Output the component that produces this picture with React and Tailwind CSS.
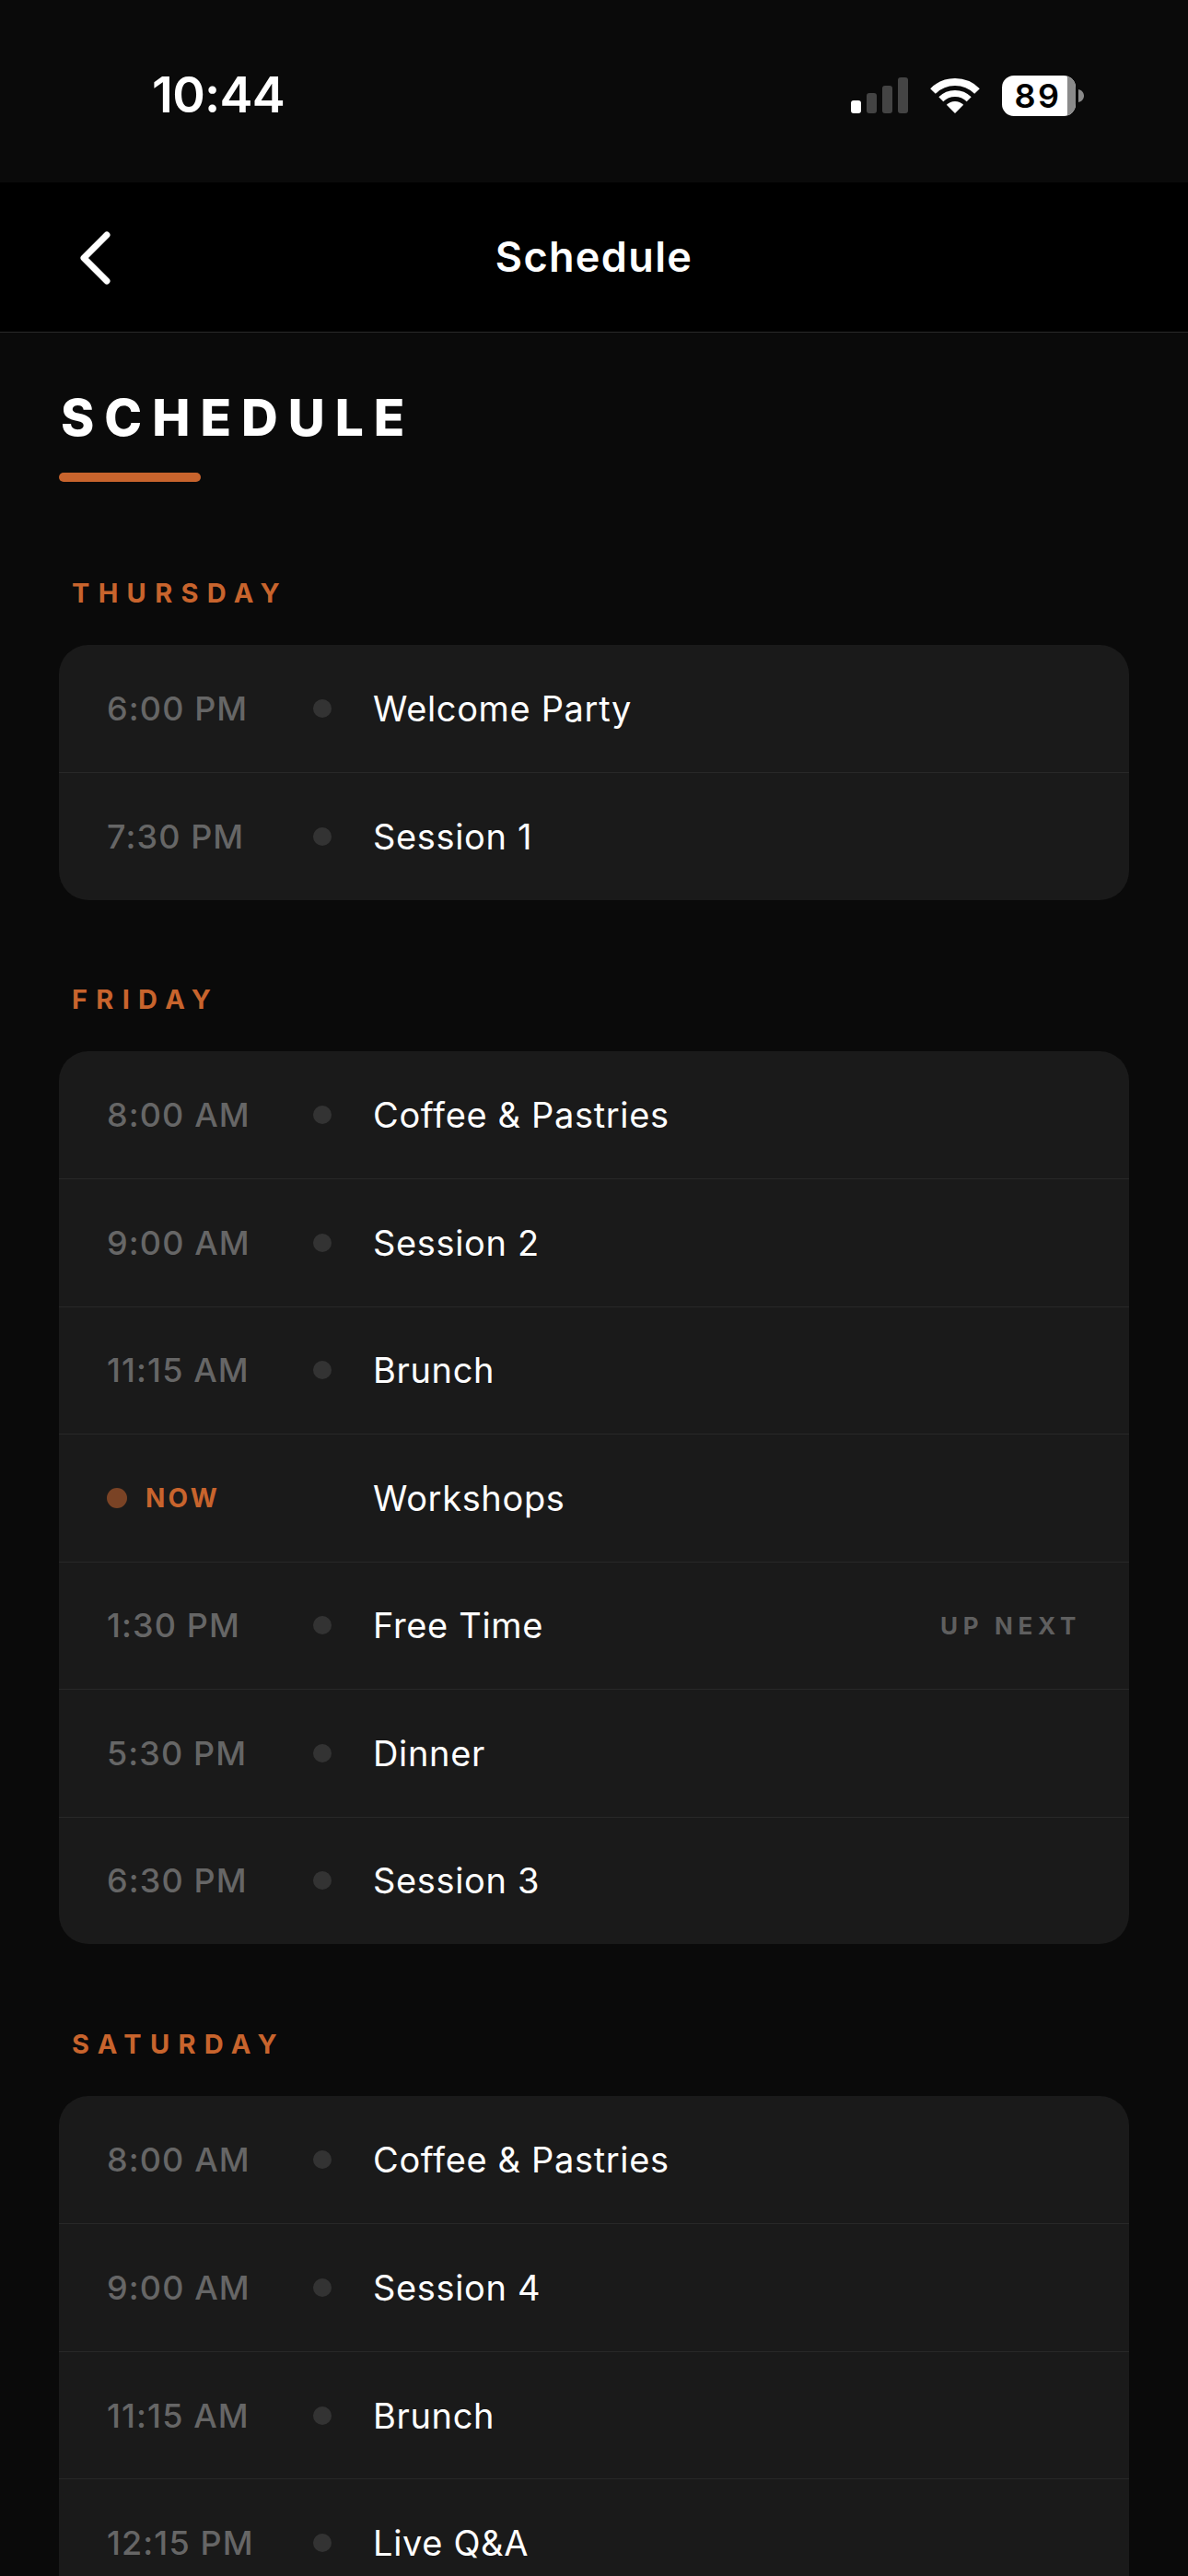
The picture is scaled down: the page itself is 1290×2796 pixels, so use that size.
const ff = "font-['Inter','Liberation_Sans',sans-serif]";

function Row({ time, title, now, next, first }) {
  return (
    <div className={`flex h-[138.45px] items-center pl-[52px] pr-[52px] ${first ? "" : "border-t border-[#282828]"}`}>
      {now ? (
        <div className="flex w-[289px] items-center">
          <span className="h-[22px] w-[22px] rounded-full bg-[#7a4325]" />
          <span className="ml-[20px] text-[28px] font-bold tracking-[3.2px] text-[#c8642d]">NOW</span>
        </div>
      ) : (
        <div className="flex w-[289px] items-center">
          <span className="w-[224px] text-[36px] font-medium tracking-[1.1px] text-[#666666]">{time}</span>
          <span className="h-[20px] w-[20px] rounded-full bg-[#333333]" />
        </div>
      )}
      <span className="flex-1 text-[38px] leading-none tracking-[0.65px] text-white">{title}</span>
      {next && <span className="text-[26px] font-bold tracking-[5.7px] text-[#5f5f5f]">UP NEXT</span>}
    </div>
  );
}

function Day({ label, rows, className }) {
  return (
    <section className={className}>
      <h2 className="ml-[14px] text-[29px] leading-[34px] font-bold tracking-[9.3px] text-[#c8642d]">{label}</h2>
      <div className="mt-[39px] overflow-hidden rounded-[32px] bg-[#1a1a1a]">
        {rows.map((r, i) => (
          <Row key={i} first={i === 0} {...r} />
        ))}
      </div>
    </section>
  );
}

export default function App() {
  return (
    <div className={`h-[2796px] w-[1290px] overflow-hidden bg-[#0a0a0a] ${ff}`}>
      <div className="flex h-[198px] items-start justify-between pl-[165px] pr-[113px] pt-[70px]">
        <span className="text-[54px] leading-[66px] font-semibold tracking-[-0.7px] text-white">10:44</span>
        <div className="mt-[12px] flex items-start">
          <svg width="62" height="39" viewBox="0 0 62 39" className="mt-[2px]">
            <rect x="0" y="25" width="11" height="14" rx="3" fill="#fff" />
            <rect x="17" y="17" width="11" height="22" rx="3" fill="#444" />
            <rect x="34" y="9" width="11" height="30" rx="3" fill="#444" />
            <rect x="51" y="0" width="11" height="39" rx="3" fill="#444" />
          </svg>
          <svg width="54" height="39" viewBox="0 0 54 39" className="ml-[24px] mt-[2px]" fill="none" stroke="#fff">
            <path d="M3 15 A34 34 0 0 1 51 15" strokeWidth="8" />
            <path d="M11.8 23.8 A21.5 21.5 0 0 1 42.2 23.8" strokeWidth="7" />
            <path d="M27 39 L17.8 29.8 A13 13 0 0 1 36.2 29.8 Z" fill="#fff" stroke="none" />
          </svg>
          <div className="relative ml-[24px] flex h-[44px] w-[80px] items-center justify-center overflow-hidden rounded-[13px] bg-white">
            <span className="pr-[2px] text-[36px] leading-none font-semibold tracking-[2.5px] text-black">89</span>
            <span className="absolute right-0 top-0 h-full w-[9px] bg-[#8a8a8a]" />
          </div>
          <svg width="6" height="14" viewBox="0 0 6 14" className="ml-[3px] mt-[15px]">
            <path d="M0 0 C4 1 6 4 6 7 C6 10 4 13 0 14 Z" fill="#8a8a8a" />
          </svg>
        </div>
      </div>

      <header className="relative flex h-[163px] items-center justify-center border-b border-[#2a2a2a] bg-black">
        <svg width="38" height="58" viewBox="0 0 38 58" className="absolute left-[84px] top-[53px]" fill="none" stroke="#fff" strokeWidth="7" strokeLinecap="round" strokeLinejoin="round">
          <path d="M32 4 L7 29 L32 54" />
        </svg>
        <span className="text-[45px] font-semibold tracking-[1.35px] text-white">Schedule</span>
      </header>

      <main className="px-[64px]">
        <h1 className="ml-[2px] mt-[62px] text-[55px] leading-[60px] font-extrabold tracking-[11px] text-white">SCHEDULE</h1>
        <div className="mt-[30px] h-[10px] w-[154px] rounded-full bg-[#c8642d]" />
        <Day
          className="mt-[104px]"
          label="THURSDAY"
          rows={[
            { time: "6:00 PM", title: "Welcome Party" },
            { time: "7:30 PM", title: "Session 1" },
          ]}
        />
        <Day
          className="mt-[91px]"
          label="FRIDAY"
          rows={[
            { time: "8:00 AM", title: "Coffee & Pastries" },
            { time: "9:00 AM", title: "Session 2" },
            { time: "11:15 AM", title: "Brunch" },
            { now: true, title: "Workshops" },
            { time: "1:30 PM", title: "Free Time", next: true },
            { time: "5:30 PM", title: "Dinner" },
            { time: "6:30 PM", title: "Session 3" },
          ]}
        />
        <Day
          className="mt-[92px]"
          label="SATURDAY"
          rows={[
            { time: "8:00 AM", title: "Coffee & Pastries" },
            { time: "9:00 AM", title: "Session 4" },
            { time: "11:15 AM", title: "Brunch" },
            { time: "12:15 PM", title: "Live Q&A" },
          ]}
        />
      </main>
    </div>
  );
}
